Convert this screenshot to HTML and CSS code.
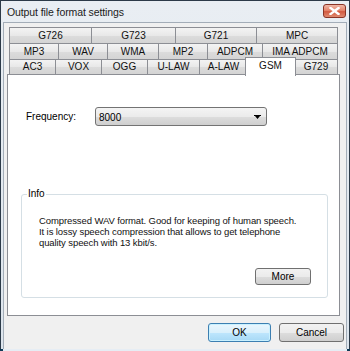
FILE: index.html
```html
<!DOCTYPE html>
<html>
<head>
<meta charset="utf-8">
<link rel="stylesheet" href="styles.css">
</head>
<body>
<div class="window">
  <div class="titlebar">
    <span class="title">Output file format settings</span>
    <span class="close"><svg width="11" height="8" viewBox="0 0 11 8"><path d="M1.5 1 L9.5 7 M9.5 1 L1.5 7" stroke="#fff" stroke-width="2.4" stroke-linecap="square" fill="none"/></svg></span>
  </div>
  <div class="client">
    <div class="tabs">
      <div class="row">
        <div class="tab w82">G726</div><div class="tab w84">G723</div><div class="tab w81">G721</div><div class="tab w81">MPC</div>
      </div>
      <div class="row">
        <div class="tab w49">MP3</div><div class="tab w49">WAV</div><div class="tab w51">WMA</div><div class="tab w49">MP2</div><div class="tab w55">ADPCM</div><div class="tab w75">IMA ADPCM</div>
      </div>
      <div class="row last">
        <div class="tab w46">AC3</div><div class="tab w46">VOX</div><div class="tab w46">OGG</div><div class="tab w52">U-LAW</div><div class="tab w48">A-LAW</div><div class="tab selected">GSM</div><div class="tab w43">G729</div>
      </div>
    </div>
    <div class="panel">
      <div class="freq">
        <span class="label">Frequency:</span>
        <div class="select"><span>8000</span><svg class="arrow" width="7" height="5" viewBox="0 0 7 5"><path d="M0 0 H7 V1 H0 Z M1 1 H6 L3.5 4 Z" fill="#000"/></svg></div>
      </div>
      <div class="info">
        <span class="legend">Info</span>
        <p>Compressed WAV format. Good for keeping of human speech.<br>It is lossy speech compression that allows to get telephone<br>quality speech with 13 kbit/s.</p>
        <div class="more-row"><button class="btn more">More</button></div>
      </div>
    </div>
    <div class="buttons">
      <button class="btn ok">OK</button>
      <button class="btn cancel">Cancel</button>
    </div>
  </div>
</div>
</body>
</html>
```
FILE: styles.css
```css
html, body {
  margin: 0;
  padding: 0;
  background: #0f3b57;
}
body {
  width: 350px;
  height: 351px;
  overflow: hidden;
  font-family: "Liberation Sans", Arial, sans-serif;
  font-size: 10px;
  color: #000;
}
.window {
  width: 348px;
  height: 348px;
  border: 1px solid #2c3a48;
  border-bottom: none;
  background: linear-gradient(#e9eef3, #dde5ed);
  display: flex;
  flex-direction: column;
}
.titlebar {
  height: 21px;
  display: flex;
  align-items: center;
  justify-content: space-between;
  padding: 0 3px 0 6px;
}
.title {
  font-size: 10.5px;
  letter-spacing: -0.1px;
  color: #1b1b1b;
  margin-top: 1px;
}
.close {
  width: 21px;
  height: 12px;
  border: 1px solid #8a3426;
  border-radius: 3px;
  background: linear-gradient(#f0b8a8, #e4856c 45%, #d25a40 55%, #e08a70);
  display: flex;
  align-items: center;
  justify-content: center;
  margin-top: -2px;
}
.client {
  flex: 1;
  margin: 0 2px 0 2px;
  border: 1px solid #a3adb8;
  border-bottom: none;
  background: #f0f0f0;
  display: flex;
  flex-direction: column;
  box-shadow: 0 3px 0 0 #e6edf4, 0 4px 0 0 #3aa9d0;
}
.tabs {
  margin: 4px 0 0 5px;
  width: 328px;
}
.row {
  display: flex;
  height: 16px;
}
.row.last {
  height: 15px;
}
.tab {
  box-sizing: border-box;
  height: 16px;
  border: 1px solid #8c8e94;
  border-bottom: none;
  margin-right: -1px;
  background: linear-gradient(#f3f3f3, #e8e8e8 50%, #dcdcdc 51%, #d4d4d4);
  text-align: center;
  line-height: 15px;
  color: #111;
}
.row.last .tab { height: 15px; line-height: 14px; }
.w82 { width: 83px; }
.w84 { width: 85px; }
.w81 { width: 82px; }
.w49 { width: 50px; }
.w51 { width: 52px; }
.w55 { width: 56px; }
.w75 { width: 76px; }
.w46 { width: 47px; }
.w52 { width: 53px; }
.w48 { width: 49px; }
.w43 { width: 44px; }
.tab.selected {
  position: relative;
  z-index: 2;
  width: 51px;
  height: 19px;
  margin: -2px -2px 0 -2px;
  background: #fff;
  line-height: 15px;
}
.row.last .tab.selected { height: 19px; line-height: 15px; }
.panel {
  box-sizing: border-box;
  margin-left: 3px;
  width: 333px;
  height: 242px;
  border: 1px solid #8c8e94;
  background: #fff;
  display: flex;
  flex-direction: column;
}
.freq {
  display: flex;
  align-items: center;
  margin: 32px 0 0 18px;
}
.label {
  width: 69px;
}
.select {
  box-sizing: border-box;
  width: 172px;
  height: 19px;
  border: 1px solid #737373;
  border-radius: 3px;
  background: linear-gradient(#f4f4f4, #ebebeb 50%, #dddddd 51%, #cfcfcf);
  display: flex;
  align-items: center;
  justify-content: space-between;
  padding: 0 5px 0 3px;
}
.select span { margin-top: 1px; }
.arrow { margin-top: 1px; }
.info {
  position: relative;
  margin: 68px 11px 0 13px;
  padding: 0 16px 0 17px;
  border: 1px solid #d5dfe5;
  border-radius: 3px;
  height: 104px;
  box-sizing: border-box;
  display: flex;
  flex-direction: column;
}
.legend {
  position: absolute;
  left: 5px;
  top: -7px;
  padding: 0 1px;
  background: #fff;
  line-height: 12px;
  color: #000;
}
.info p {
  margin: 20px 0 0 0;
  font-size: 9.5px;
  letter-spacing: -0.1px;
  line-height: 11px;
  color: #111;
  white-space: nowrap;
}
.more-row {
  margin-top: auto;
  margin-bottom: 12px;
  display: flex;
  justify-content: flex-end;
}
.btn {
  box-sizing: border-box;
  font-family: "Liberation Sans", Arial, sans-serif;
  font-size: 10px;
  color: #000;
  border: 1px solid #707070;
  border-radius: 3px;
  background: linear-gradient(#f2f2f2, #ebebeb 50%, #dddddd 51%, #cfcfcf);
  padding: 0;
}
.more {
  width: 56px;
  height: 17px;
  margin-right: 0;
}
.buttons {
  display: flex;
  justify-content: flex-end;
  gap: 8px;
  margin: 7px 2px 0 0;
}
.ok {
  width: 63px;
  height: 19px;
  border-color: #3c7fb1;
  background: linear-gradient(#eaf6fd, #d9f0fc 50%, #bee6fd 51%, #a7d9f5);
  box-shadow: inset 0 0 0 1px #c9f1ff;
}
.cancel {
  width: 65px;
  height: 19px;
}
```
